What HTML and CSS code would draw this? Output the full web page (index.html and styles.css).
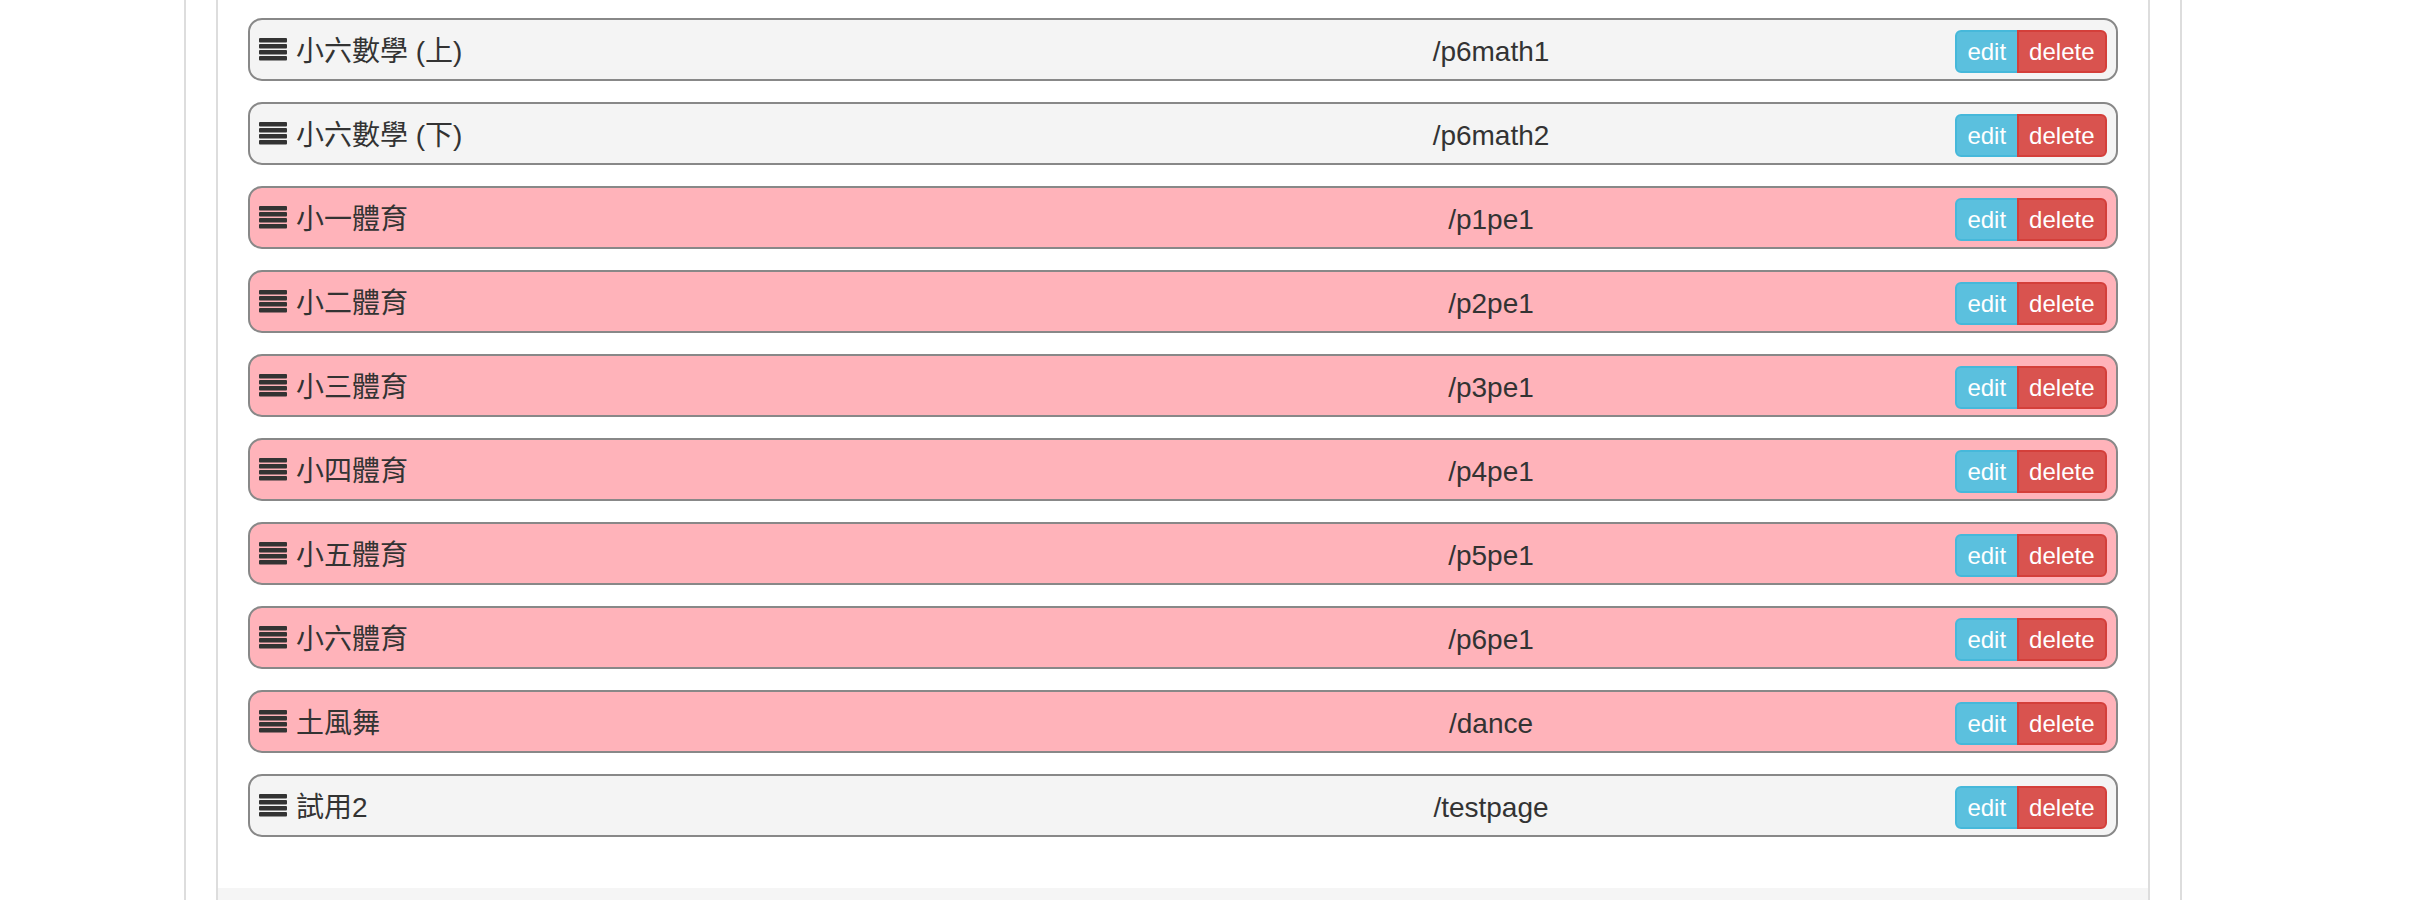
FILE: index.html
```html
<!DOCTYPE html>
<html lang="zh-Hant">
<head>
<meta charset="utf-8">
<title>Pages</title>
<link rel="stylesheet" href="styles.css">
</head>
<body>
<div class="page">
  <div class="panel">
    <div class="panel-body">
      <ul class="page-list">
        <li class="item"><span class="name"><svg class="handle" width="28" height="23" viewBox="0 0 28 23"><rect x="0" y="0" width="28" height="4.5" rx="1"/><rect x="0" y="6" width="28" height="4.5" rx="1"/><rect x="0" y="12" width="28" height="4.5" rx="1"/><rect x="0" y="18" width="28" height="4.5" rx="1"/></svg>小六數學 (上)</span><span class="path">/p6math1</span><span class="actions"><button class="btn btn-edit">edit</button><button class="btn btn-delete">delete</button></span></li>
        <li class="item"><span class="name"><svg class="handle" width="28" height="23" viewBox="0 0 28 23"><rect x="0" y="0" width="28" height="4.5" rx="1"/><rect x="0" y="6" width="28" height="4.5" rx="1"/><rect x="0" y="12" width="28" height="4.5" rx="1"/><rect x="0" y="18" width="28" height="4.5" rx="1"/></svg>小六數學 (下)</span><span class="path">/p6math2</span><span class="actions"><button class="btn btn-edit">edit</button><button class="btn btn-delete">delete</button></span></li>
        <li class="item hidden-page"><span class="name"><svg class="handle" width="28" height="23" viewBox="0 0 28 23"><rect x="0" y="0" width="28" height="4.5" rx="1"/><rect x="0" y="6" width="28" height="4.5" rx="1"/><rect x="0" y="12" width="28" height="4.5" rx="1"/><rect x="0" y="18" width="28" height="4.5" rx="1"/></svg>小一體育</span><span class="path">/p1pe1</span><span class="actions"><button class="btn btn-edit">edit</button><button class="btn btn-delete">delete</button></span></li>
        <li class="item hidden-page"><span class="name"><svg class="handle" width="28" height="23" viewBox="0 0 28 23"><rect x="0" y="0" width="28" height="4.5" rx="1"/><rect x="0" y="6" width="28" height="4.5" rx="1"/><rect x="0" y="12" width="28" height="4.5" rx="1"/><rect x="0" y="18" width="28" height="4.5" rx="1"/></svg>小二體育</span><span class="path">/p2pe1</span><span class="actions"><button class="btn btn-edit">edit</button><button class="btn btn-delete">delete</button></span></li>
        <li class="item hidden-page"><span class="name"><svg class="handle" width="28" height="23" viewBox="0 0 28 23"><rect x="0" y="0" width="28" height="4.5" rx="1"/><rect x="0" y="6" width="28" height="4.5" rx="1"/><rect x="0" y="12" width="28" height="4.5" rx="1"/><rect x="0" y="18" width="28" height="4.5" rx="1"/></svg>小三體育</span><span class="path">/p3pe1</span><span class="actions"><button class="btn btn-edit">edit</button><button class="btn btn-delete">delete</button></span></li>
        <li class="item hidden-page"><span class="name"><svg class="handle" width="28" height="23" viewBox="0 0 28 23"><rect x="0" y="0" width="28" height="4.5" rx="1"/><rect x="0" y="6" width="28" height="4.5" rx="1"/><rect x="0" y="12" width="28" height="4.5" rx="1"/><rect x="0" y="18" width="28" height="4.5" rx="1"/></svg>小四體育</span><span class="path">/p4pe1</span><span class="actions"><button class="btn btn-edit">edit</button><button class="btn btn-delete">delete</button></span></li>
        <li class="item hidden-page"><span class="name"><svg class="handle" width="28" height="23" viewBox="0 0 28 23"><rect x="0" y="0" width="28" height="4.5" rx="1"/><rect x="0" y="6" width="28" height="4.5" rx="1"/><rect x="0" y="12" width="28" height="4.5" rx="1"/><rect x="0" y="18" width="28" height="4.5" rx="1"/></svg>小五體育</span><span class="path">/p5pe1</span><span class="actions"><button class="btn btn-edit">edit</button><button class="btn btn-delete">delete</button></span></li>
        <li class="item hidden-page"><span class="name"><svg class="handle" width="28" height="23" viewBox="0 0 28 23"><rect x="0" y="0" width="28" height="4.5" rx="1"/><rect x="0" y="6" width="28" height="4.5" rx="1"/><rect x="0" y="12" width="28" height="4.5" rx="1"/><rect x="0" y="18" width="28" height="4.5" rx="1"/></svg>小六體育</span><span class="path">/p6pe1</span><span class="actions"><button class="btn btn-edit">edit</button><button class="btn btn-delete">delete</button></span></li>
        <li class="item hidden-page"><span class="name"><svg class="handle" width="28" height="23" viewBox="0 0 28 23"><rect x="0" y="0" width="28" height="4.5" rx="1"/><rect x="0" y="6" width="28" height="4.5" rx="1"/><rect x="0" y="12" width="28" height="4.5" rx="1"/><rect x="0" y="18" width="28" height="4.5" rx="1"/></svg>土風舞</span><span class="path">/dance</span><span class="actions"><button class="btn btn-edit">edit</button><button class="btn btn-delete">delete</button></span></li>
        <li class="item"><span class="name"><svg class="handle" width="28" height="23" viewBox="0 0 28 23"><rect x="0" y="0" width="28" height="4.5" rx="1"/><rect x="0" y="6" width="28" height="4.5" rx="1"/><rect x="0" y="12" width="28" height="4.5" rx="1"/><rect x="0" y="18" width="28" height="4.5" rx="1"/></svg>試用2</span><span class="path">/testpage</span><span class="actions"><button class="btn btn-edit">edit</button><button class="btn btn-delete">delete</button></span></li>
      </ul>
    </div>
    <div class="panel-footer"></div>
  </div>
</div>
</body>
</html>
```

FILE: styles.css
```css
html, body {
  margin: 0;
  padding: 0;
  background: #ffffff;
}

body {
  font-family: "Liberation Sans", "Noto Sans CJK TC", sans-serif;
  color: #333333;
}

.page {
  margin-left: 184px;
  width: 1998px;
  box-sizing: border-box;
  border-left: 2px solid #dddddd;
  border-right: 2px solid #dddddd;
  padding: 0 30px;
  min-height: 100vh;
}

.panel {
  border-left: 2px solid #dddddd;
  border-right: 2px solid #dddddd;
  min-height: 100vh;
  display: flex;
  flex-direction: column;
}

.panel-body {
  padding: 18px 30px 30px;
}

.panel-footer {
  background: #f5f5f5;
  height: 60px;
}

.page-list {
  list-style: none;
  margin: 0;
  padding: 0;
}

.item {
  display: grid;
  grid-template-columns: 6fr 4fr 2fr;
  align-items: center;
  box-sizing: border-box;
  height: 63px;
  margin-bottom: 21px;
  padding: 10px 9px 6px;
  border: 2px solid #888888;
  border-radius: 14px;
  background: #f4f4f4;
  font-size: 28px;
  line-height: 40px;
}

.item.hidden-page {
  background: #ffb3ba;
}

.name {
  white-space: nowrap;
}

.handle {
  fill: #333333;
  vertical-align: 0;
  margin-right: 9px;
}

.path {
  text-align: center;
  white-space: nowrap;
}

.actions {
  display: flex;
  justify-content: flex-end;
}

.btn {
  font-family: "Liberation Sans", sans-serif;
  font-size: 24px;
  line-height: 35px;
  padding: 2px 10.5px;
  border: 2px solid transparent;
  color: #ffffff;
  margin: 0;
  cursor: pointer;
}

.btn-edit {
  background: #5bc0de;
  border-color: #46b8da;
  border-radius: 6px 0 0 6px;
}

.btn-delete {
  background: #d9534f;
  border-color: #d43f3a;
  border-radius: 0 6px 6px 0;
  margin-left: -2px;
}
```
